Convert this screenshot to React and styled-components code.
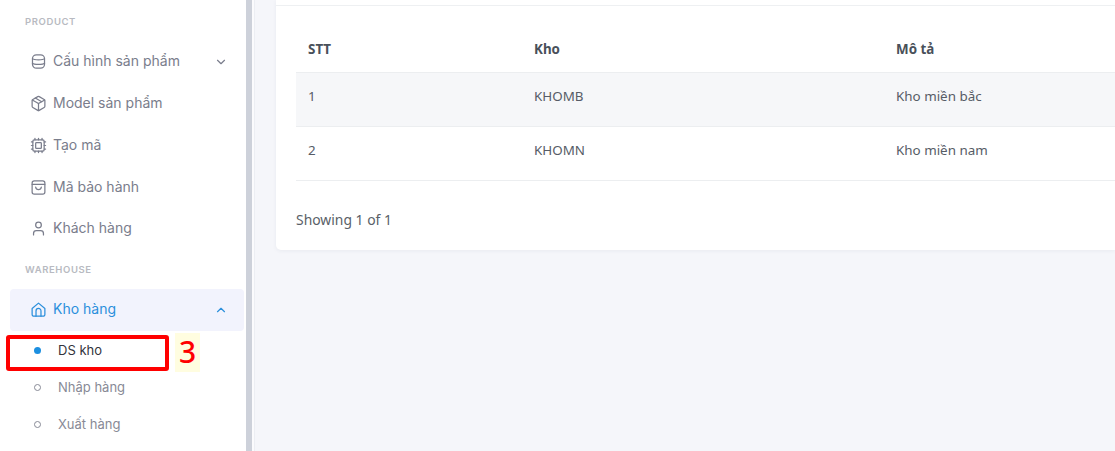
import React from "react";
import styled, { createGlobalStyle } from "styled-components";
import { Package, Cpu, User, ChevronDown, ChevronUp } from "lucide-react";

const Global = createGlobalStyle`
  html, body { margin: 0; padding: 0; height: 100%; overflow: hidden; background: #f5f6fa; }
  #root { height: 100%; }
`;

const Page = styled.div`
  display: flex; height: 451px; width: 1115px; overflow: hidden; background: #f5f6fa;
  font-family: "Noto Sans", "Open Sans", sans-serif;
`;
const Sidebar = styled.aside`
  position: relative; width: 246px; flex: none; height: 451px; background: #fff; overflow: hidden;
  box-sizing: border-box; padding: 15px 2px 0 10px;
  font-family: Inter, sans-serif;
`;
const Scrollbar = styled.div`
  width: 6px; flex: none; background: #cdd1da;
`;
const Divider = styled.div`
  width: 2px; flex: none; background: #fbfbfd; border-right: 1px solid #eceef3;
`;
const SectionLabel = styled.div`
  height: 13px; line-height: 13px; font-size: 9.5px; font-weight: 600; letter-spacing: .6px; color: #b8bac1;
  padding-left: 15px; margin-top: ${p => p.$mt || 0}px; margin-bottom: ${p => p.$mb}px;
`;
const Item = styled.div`
  display: flex; align-items: center; height: ${p => p.$h || 41.75}px; padding: 0 16px 0 20px; border-radius: 4px;
  font-size: 14px; color: ${p => p.$active ? "#2b8fdc" : "#7a7d8c"};
  background: ${p => p.$active ? "#f2f3fd" : "transparent"};
  svg.main { width: 17px; height: 17px; margin-right: 6px; flex: none; stroke-width: 1.75; }
  svg.chev { width: 14px; height: 14px; margin-left: auto; stroke-width: 2; }
`;
const ItemLabel = styled.span`
  position: relative; top: -1px;
`;
const SubList = styled.div`
  padding-top: 1px;
`;
const SubItem = styled.div`
  display: flex; align-items: center; height: 37px; padding-left: 24px; font-size: 13px;
  color: ${p => p.$active ? "#33343c" : "#888a96"};
`;
const Dot = styled.span`
  width: 7px; height: 7px; border-radius: 50%; box-sizing: border-box; margin-right: 17px; flex: none;
  background: ${p => p.$active ? "#1c8fe0" : "transparent"};
  border: ${p => p.$active ? "none" : "1.5px solid #888a96"};
`;
const Highlight = styled.div`
  position: absolute; left: 6px; top: 335px; width: 163px; height: 36px; box-sizing: border-box;
  border: 4px solid #f00; border-radius: 3px;
`;
const Badge = styled.div`
  position: absolute; left: 175px; top: 333px; width: 25px; height: 39px; background: #fffde0;
  color: #f00; font-size: 30px; font-weight: 500; line-height: 37px; text-align: center; font-family: "Noto Sans", sans-serif;
`;
const Main = styled.main`
  flex: 1; min-width: 0; padding-left: 21px;
`;
const Card = styled.section`
  height: 250px; box-sizing: border-box; background: #fff; border-radius: 0 0 0 5px;
  box-shadow: 0 1px 4px rgba(40,50,80,.06);
`;
const CardTop = styled.div`
  height: 5px; border-bottom: 1px solid #eef0f2;
`;
const Body = styled.div`
  padding: 0 0 0 20px;
`;
const Row = styled.div`
  display: grid; grid-template-columns: 226px 362px 1fr; align-items: start;
  box-sizing: border-box; height: ${p => p.$h}px; padding-top: ${p => p.$pt}px;
  border-bottom: 1px solid #eceef0;
  background: ${p => p.$shade ? "#f6f7f9" : "#fff"};
  font-size: 13.4px; color: #565c66;
`;
const HeadCell = styled.div`
  padding-left: 12px; font-weight: 700; font-size: 13.4px; color: #49505a; line-height: 18px;
`;
const Cell = styled.div`
  padding-left: 12px; line-height: 18px;
`;
const Footer = styled.div`
  margin-top: 30px; font-size: 13.9px; line-height: 18px; color: #5a5f68;
`;

const Svg = ({ children }) => (
  <svg className="main" viewBox="0 0 24 24" fill="none" stroke="currentColor" strokeLinecap="round" strokeLinejoin="round">
    {children}
  </svg>
);
const DatabaseIcon = () => (
  <Svg>
    <rect x="3.5" y="2.5" width="17" height="19" rx="5.5" />
    <path d="M3.5 8c2 2.2 15 2.2 17 0" />
    <path d="M3.5 14.5c2 2.2 15 2.2 17 0" />
  </Svg>
);
const BagIcon = () => (
  <Svg>
    <rect x="3" y="2.5" width="18" height="19" rx="3" />
    <path d="M3 7.5h18" />
    <path d="M8 11.5c.6 4.6 7.4 4.6 8 0" />
  </Svg>
);
const HomeIcon = () => (
  <Svg>
    <path d="M3 10.5 12 3l9 7.5V19a2.5 2.5 0 0 1-2.5 2.5h-13A2.5 2.5 0 0 1 3 19z" />
    <path d="M8.5 21.5V14a3.5 3.5 0 0 1 7 0v7.5" />
  </Svg>
);

const rows = [
  { id: 1, code: "KHOMB", desc: "Kho miền bắc", shade: true },
  { id: 2, code: "KHOMN", desc: "Kho miền nam" },
];

export default function App() {
  return (
    <>
      <Global />
      <Page>
        <Sidebar>
          <SectionLabel $mb={13}>PRODUCT</SectionLabel>
          <Item><DatabaseIcon /><ItemLabel>Cấu hình sản phẩm</ItemLabel><ChevronDown className="chev" /></Item>
          <Item><Package className="main" /><ItemLabel>Model sản phẩm</ItemLabel></Item>
          <Item><Cpu className="main" /><ItemLabel>Tạo mã</ItemLabel></Item>
          <Item><BagIcon /><ItemLabel>Mã bảo hành</ItemLabel></Item>
          <Item><User className="main" /><ItemLabel>Khách hàng</ItemLabel></Item>
          <SectionLabel $mt={13} $mb={13}>WAREHOUSE</SectionLabel>
          <Item $active $h={42}><HomeIcon /><ItemLabel>Kho hàng</ItemLabel><ChevronUp className="chev" /></Item>
          <SubList>
            <SubItem $active><Dot $active />DS kho</SubItem>
            <SubItem><Dot />Nhập hàng</SubItem>
            <SubItem><Dot />Xuất hàng</SubItem>
          </SubList>
          <Highlight />
          <Badge>3</Badge>
        </Sidebar>
        <Scrollbar />
        <Divider />
        <Main>
          <Card>
            <CardTop />
            <Body>
              <Row $h={67} $pt={34}>
                <HeadCell>STT</HeadCell><HeadCell>Kho</HeadCell><HeadCell>Mô tả</HeadCell>
              </Row>
              {rows.map(r => (
                <Row key={r.id} $h={54} $pt={14} $shade={r.shade}>
                  <Cell>{r.id}</Cell><Cell>{r.code}</Cell><Cell>{r.desc}</Cell>
                </Row>
              ))}
              <Footer>Showing 1 of 1</Footer>
            </Body>
          </Card>
        </Main>
      </Page>
    </>
  );
}
